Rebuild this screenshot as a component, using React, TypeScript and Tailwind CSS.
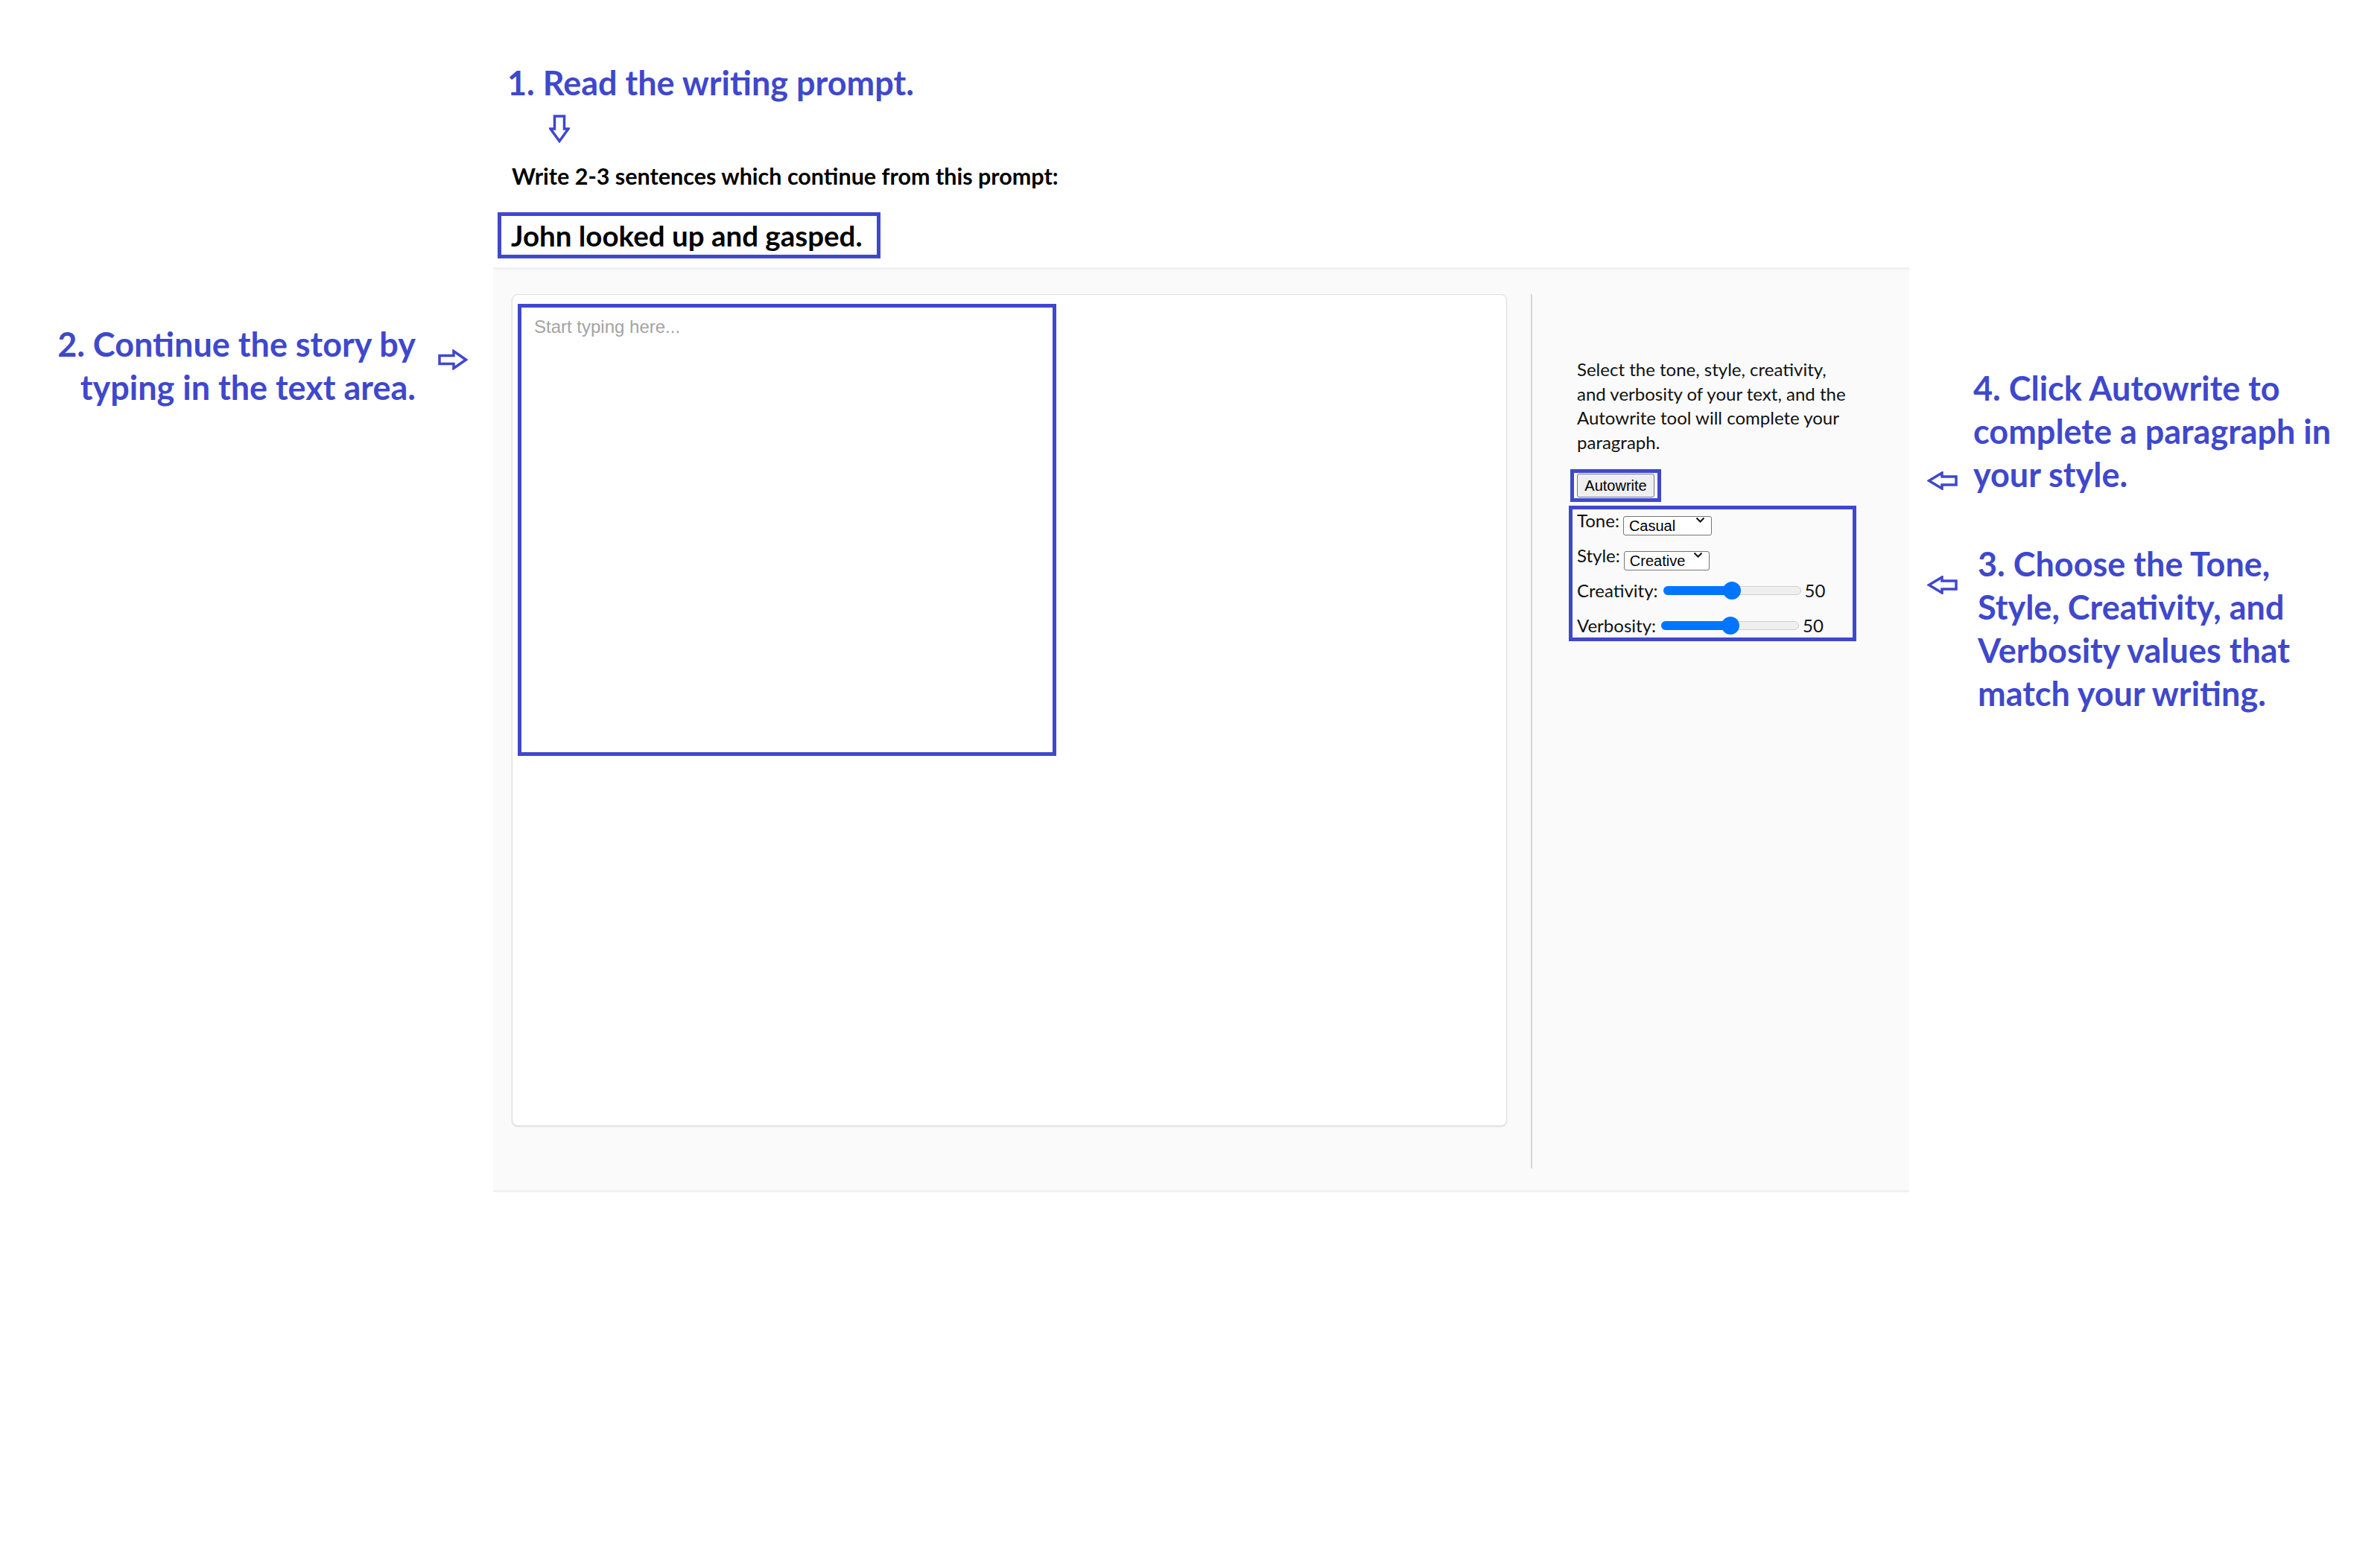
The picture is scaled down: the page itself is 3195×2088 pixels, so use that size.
import React from "react";

const BLUE = "#3F48CC";

function ArrowDown() {
  return (
    <svg width="28" height="38" viewBox="0 0 28 38" fill="none">
      <polygon
        points="7.5,2 20.5,2 20.5,19 26,19 14,35.5 2,19 7.5,19"
        fill="white"
        stroke={BLUE}
        strokeWidth="3.5"
      />
    </svg>
  );
}

function ArrowRight() {
  return (
    <svg width="40" height="28" viewBox="0 0 40 28" fill="none">
      <polygon
        points="2,8.5 21,8.5 21,2.5 37.5,14 21,25.5 21,19.5 2,19.5"
        fill="white"
        stroke={BLUE}
        strokeWidth="3.5"
      />
    </svg>
  );
}

function ArrowLeft() {
  return (
    <svg width="41" height="25" viewBox="0 0 41 25" fill="none">
      <polygon
        points="39,7 20,7 20,2 2.5,12.5 20,23 20,18 39,18"
        fill="white"
        stroke={BLUE}
        strokeWidth="3.5"
      />
    </svg>
  );
}

function Select({ value, width }: { value: string; width: string }) {
  return (
    <div className={`relative h-[26px] ${width}`}>
      <select
        defaultValue={value}
        className="appearance-none w-full h-full bg-white border border-[#767676] rounded-[3px] pl-[7px] text-[20px] leading-[24px] text-black font-['Liberation_Sans',Arial,sans-serif] outline-none"
      >
        <option>{value}</option>
      </select>
      {/* chevron */}
      <svg
        className="absolute right-[9px] top-[8px] pointer-events-none"
        width="13"
        height="9"
        viewBox="0 0 13 9"
        fill="none"
      >
        <path d="M1.5 1.5 L6.5 6.5 L11.5 1.5" stroke="#111" strokeWidth="2" />
      </svg>
    </div>
  );
}

function Slider({ value }: { value: number }) {
  const pos = 12 + (185 - 24) * (value / 100);
  return (
    <div className="relative w-[185px] h-[24px] flex items-center">
      <div className="w-full h-[12px] rounded-full border border-[#cfcfcf] bg-[#efefef]" />
      <div
        className="absolute left-0 h-[12px] rounded-full bg-[#0075ff]"
        style={{ width: pos }}
      />
      <div
        className="absolute top-0 w-[24px] h-[24px] rounded-full bg-[#0075ff]"
        style={{ left: pos - 12 }}
      />
    </div>
  );
}

export default function App() {
  return (
    <div className="w-[3195px] h-[2088px] bg-white flex items-start overflow-hidden font-['Lato','Liberation_Sans',sans-serif]">
      {/* Left annotation */}
      <div className="w-[662px] shrink-0 pt-[433px] pr-[34px] flex justify-end items-start gap-[30px]">
        <p className="text-right text-[45px] leading-[58px] font-bold text-[#3F48CC]">
          2. Continue the story by
          <br />
          typing in the text area.
        </p>
        <div className="mt-[36px]">
          <ArrowRight />
        </div>
      </div>

      {/* Center: prompt + app */}
      <div className="w-[1901px] shrink-0 flex flex-col items-start">
        <h1 className="ml-[19px] mt-[82px] text-[45px] leading-[58px] font-bold text-[#3F48CC]">
          1. Read the writing prompt.
        </h1>
        <div className="ml-[75px] mt-[14px]">
          <ArrowDown />
        </div>
        <p className="ml-[25px] mt-[26px] text-[30.5px] leading-[36px] font-bold text-black">
          Write 2-3 sentences which continue from this prompt:
        </p>
        <div className="ml-[6px] mt-[31px] w-[514px] h-[62px] border-[5px] border-[#3F48CC] pl-[13px] flex items-center">
          <span className="text-[38.5px] leading-[44px] font-bold text-black">
            John looked up and gasped.
          </span>
        </div>

        {/* App panel */}
        <div className="mt-[12px] w-[1901px] h-[1242px] bg-[#fafafa] border-y-[3px] border-[#f1f1f1] flex items-start pl-[25px] pt-[33px]">
          {/* Editor card */}
          <div className="w-[1336px] h-[1117px] shrink-0 bg-white rounded-[8px] border border-[#e0e0e0] shadow-[0_1px_2px_rgba(0,0,0,0.12)] pl-[7px] pt-[12px]">
            <textarea
              placeholder="Start typing here..."
              className="block w-[723px] h-[607px] resize-none border-[5px] border-[#3F48CC] bg-white px-[17px] pt-[8px] text-[24px] font-['Liberation_Sans',Arial,sans-serif] text-black placeholder:text-[#a3a3a3] outline-none"
            />
          </div>

          {/* Divider */}
          <div className="ml-[32px] w-[2px] h-[1174px] shrink-0 bg-[#d6d6d6]" />

          {/* Settings */}
          <div className="pl-[60px] pt-[85px] flex flex-col items-start">
            <p className="text-[24px] leading-[32.6px] text-[#111]">
              Select the tone, style, creativity,
              <br />
              and verbosity of your text, and the
              <br />
              Autowrite tool will complete your
              <br />
              paragraph.
            </p>

            <div className="-ml-[9px] mt-[20px] border-[5px] border-[#3F48CC] px-[4px] py-[1px]">
              <button className="w-[104px] h-[32px] bg-[#efefef] border border-[#767676] rounded-[3px] text-[20px] text-black font-['Liberation_Sans',Arial,sans-serif]">
                Autowrite
              </button>
            </div>

            <div className="-ml-[11px] mt-[5px] w-[386px] border-[5px] border-[#3F48CC] pl-[6px] pt-[2px] pb-[3px] flex flex-col gap-[21px] text-[24px] text-[#111]">
              <div className="h-[26px] flex items-center gap-[5px]">
                <span>Tone:</span>
                <Select value="Casual" width="w-[119px]" />
              </div>
              <div className="h-[26px] flex items-center gap-[5px]">
                <span>Style:</span>
                <Select value="Creative" width="w-[115px]" />
              </div>
              <div className="h-[26px] flex items-center gap-[7px]">
                <span>Creativity:</span>
                <Slider value={50} />
                <span className="ml-[-2px]">50</span>
              </div>
              <div className="h-[26px] flex items-center gap-[7px]">
                <span>Verbosity:</span>
                <Slider value={50} />
                <span className="ml-[-2px]">50</span>
              </div>
            </div>
          </div>
        </div>
      </div>

      {/* Right annotations */}
      <div className="flex flex-col items-start pl-[24px]">
        <div className="mt-[492px] flex items-start gap-[21px]">
          <div className="mt-[141px]">
            <ArrowLeft />
          </div>
          <p className="text-[45px] leading-[58px] font-bold text-[#3F48CC]">
            4. Click Autowrite to
            <br />
            complete a paragraph in
            <br />
            your style.
          </p>
        </div>
        <div className="mt-[62px] flex items-start gap-[27px]">
          <div className="mt-[45px]">
            <ArrowLeft />
          </div>
          <p className="text-[45px] leading-[58px] font-bold text-[#3F48CC]">
            3. Choose the Tone,
            <br />
            Style, Creativity, and
            <br />
            Verbosity values that
            <br />
            match your writing.
          </p>
        </div>
      </div>
    </div>
  );
}
